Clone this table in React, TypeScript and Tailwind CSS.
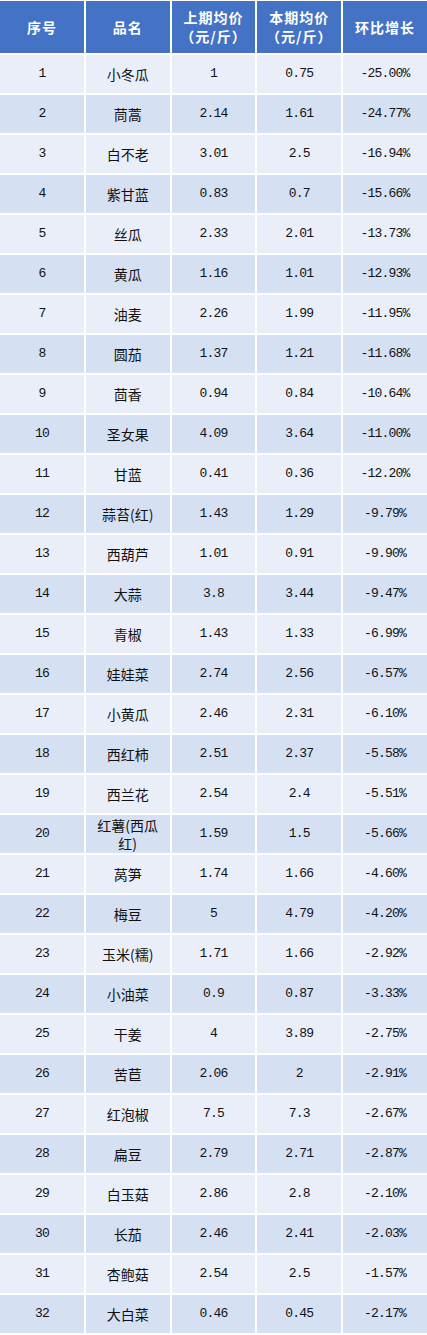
const rows: [string, string, string, string][] = [
  ["小冬瓜", "1", "0.75", "-25.00%"],
  ["茼蒿", "2.14", "1.61", "-24.77%"],
  ["白不老", "3.01", "2.5", "-16.94%"],
  ["紫甘蓝", "0.83", "0.7", "-15.66%"],
  ["丝瓜", "2.33", "2.01", "-13.73%"],
  ["黄瓜", "1.16", "1.01", "-12.93%"],
  ["油麦", "2.26", "1.99", "-11.95%"],
  ["圆茄", "1.37", "1.21", "-11.68%"],
  ["茴香", "0.94", "0.84", "-10.64%"],
  ["圣女果", "4.09", "3.64", "-11.00%"],
  ["甘蓝", "0.41", "0.36", "-12.20%"],
  ["蒜苔(红)", "1.43", "1.29", "-9.79%"],
  ["西葫芦", "1.01", "0.91", "-9.90%"],
  ["大蒜", "3.8", "3.44", "-9.47%"],
  ["青椒", "1.43", "1.33", "-6.99%"],
  ["娃娃菜", "2.74", "2.56", "-6.57%"],
  ["小黄瓜", "2.46", "2.31", "-6.10%"],
  ["西红柿", "2.51", "2.37", "-5.58%"],
  ["西兰花", "2.54", "2.4", "-5.51%"],
  ["红薯(西瓜红)", "1.59", "1.5", "-5.66%"],
  ["莴笋", "1.74", "1.66", "-4.60%"],
  ["梅豆", "5", "4.79", "-4.20%"],
  ["玉米(糯)", "1.71", "1.66", "-2.92%"],
  ["小油菜", "0.9", "0.87", "-3.33%"],
  ["干姜", "4", "3.89", "-2.75%"],
  ["苦苣", "2.06", "2", "-2.91%"],
  ["红泡椒", "7.5", "7.3", "-2.67%"],
  ["扁豆", "2.79", "2.71", "-2.87%"],
  ["白玉菇", "2.86", "2.8", "-2.10%"],
  ["长茄", "2.46", "2.41", "-2.03%"],
  ["杏鲍菇", "2.54", "2.5", "-1.57%"],
  ["大白菜", "0.46", "0.45", "-2.17%"],
];

const cjk = "font-['Noto_Sans_CJK_SC',sans-serif]";
const mono = "font-['Liberation_Mono','Noto_Sans_CJK_SC',monospace] text-[13px] tracking-[-0.8px]";

function HeadCell({ children }: { children: React.ReactNode }) {
  return (
    <div className={`flex items-center justify-center bg-[#4472c4] text-center text-[14px] leading-[19px] font-bold tracking-[1px] text-white ${cjk}`}>
      <div>{children}</div>
    </div>
  );
}

export default function App() {
  return (
    <div className="w-[427px] bg-white pt-px pb-[2px] text-[#111]">
      <div className="grid h-[52px] grid-cols-5 gap-x-[2px]">
        <HeadCell>序号</HeadCell>
        <HeadCell>品名</HeadCell>
        <HeadCell>
          上期均价
          <br />
          （元/斤）
        </HeadCell>
        <HeadCell>
          本期均价
          <br />
          （元/斤）
        </HeadCell>
        <HeadCell>环比增长</HeadCell>
      </div>

      {rows.map(([name, prev, cur, change], i) => {
        const bg = i % 2 === 0 ? "bg-[#e9eef9]" : "bg-[#d6e0f3]";
        return (
          <div key={i} className="mt-[2px] grid h-[38px] grid-cols-5 gap-x-[2px]">
            <div className={`flex items-center justify-center ${bg} ${mono}`}>{i + 1}</div>
            <div className={`flex items-center justify-center px-[9px] text-center text-[14px] leading-[18px] ${bg} ${cjk}`}>
              {name}
            </div>
            <div className={`flex items-center justify-center ${bg} ${mono}`}>{prev}</div>
            <div className={`flex items-center justify-center ${bg} ${mono}`}>{cur}</div>
            <div className={`flex items-center justify-center ${bg} ${mono}`}>{change}</div>
          </div>
        );
      })}
    </div>
  );
}
